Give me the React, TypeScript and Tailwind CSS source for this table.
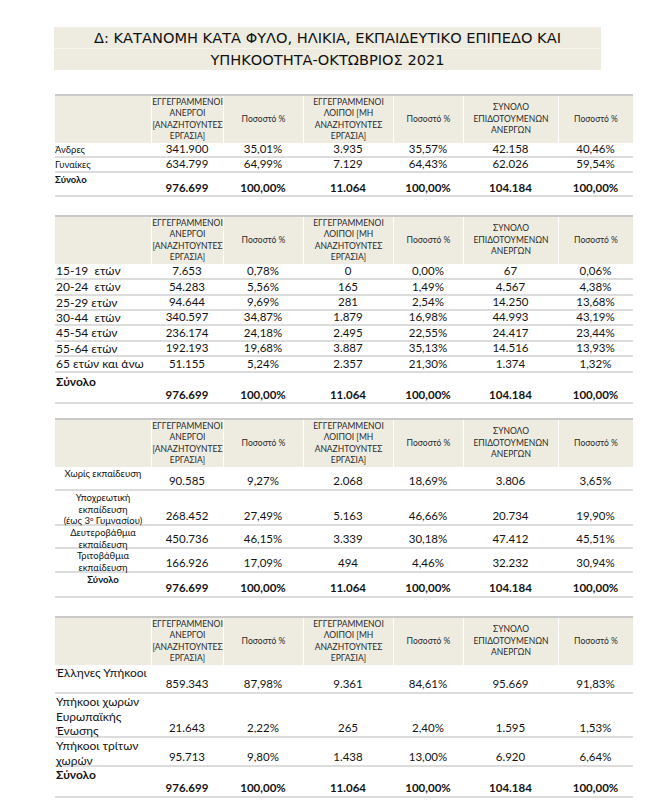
import type { ReactNode } from "react"

// column widths, label column first
const cols = ["w-[96px]", "w-[72px]", "w-[80px]", "w-[90px]", "w-[70px]", "w-[95px]", "w-[75px]"]

interface IRow {
    label: ReactNode,
    values: string[],
    h: string,
    total?: boolean,
}

interface ITable {
    rows: IRow[],
    labelCls: string,
    numCls: string,
    totalLabelCls: string,
}

const Header = () => {
    return (
        <div className="flex h-[49px] bg-[#eeece1] border-t-2 border-[#c9c9c9] text-[8.5px] leading-[11.5px] text-[#2a2a2a]">
            <div className={cols[0]} />
            <div className={`${cols[1]} border-l border-white flex items-center justify-center text-center`}>
                ΕΓΓΕΓΡΑΜΜΕΝΟΙ<br />ΑΝΕΡΓΟΙ<br />[ΑΝΑΖΗΤΟΥΝΤΕΣ<br />ΕΡΓΑΣΙΑ]
            </div>
            <div className={`${cols[2]} border-l border-white flex items-center justify-center`}>Ποσοστό %</div>
            <div className={`${cols[3]} border-l border-white flex items-center justify-center text-center`}>
                ΕΓΓΕΓΡΑΜΜΕΝΟΙ<br />ΛΟΙΠΟΙ [ΜΗ<br />ΑΝΑΖΗΤΟΥΝΤΕΣ<br />ΕΡΓΑΣΙΑ]
            </div>
            <div className={`${cols[4]} border-l border-white flex items-center justify-center`}>Ποσοστό %</div>
            <div className={`${cols[5]} border-l border-white flex items-center justify-center text-center`}>
                ΣΥΝΟΛΟ<br />ΕΠΙΔΟΤΟΥΜΕΝΩΝ<br />ΑΝΕΡΓΩΝ
            </div>
            <div className={`${cols[6]} border-l border-white flex items-center justify-center`}>Ποσοστό %</div>
        </div>
    )
}

const Table = (props: ITable) => {
    const { rows, labelCls, numCls, totalLabelCls } = props
    return (
        <div className="w-[578px]">
            <Header />
            {rows.map((r, i) => (
                <div key={i} className={`flex ${r.h} border-b-2 border-[#dcdcdc] text-[#141414]`}>
                    <div className={`${cols[0]} ${r.total ? totalLabelCls : labelCls}`}>{r.label}</div>
                    {r.values.map((v, j) => (
                        <div key={j} className={`${cols[j + 1]} flex justify-center text-[11.5px] ${numCls} ${r.total ? "font-bold" : ""}`}>
                            {v}
                        </div>
                    ))}
                </div>
            ))}
        </div>
    )
}

const totals = ["976.699", "100,00%", "11.064", "100,00%", "104.184", "100,00%"]

const App = () => {
    return (
        <div className="bg-white w-[655px] h-[805px] pt-[27px] font-['Lato',sans-serif]">
            {/* τίτλος */}
            <div className="ml-[54px] w-[547px] bg-[#eeebe0] font-['DejaVu_Sans',sans-serif] text-[14.6px] text-[#111] text-center">
                <div className="h-[22px] leading-[22px] border-b border-[#f7f5ee]">Δ: ΚΑΤΑΝΟΜΗ ΚΑΤΑ ΦΥΛΟ, ΗΛΙΚΙΑ, ΕΚΠΑΙΔΕΥΤΙΚΟ ΕΠΙΠΕΔΟ ΚΑΙ</div>
                <div className="h-[21px] leading-[21px]">ΥΠΗΚΟΟΤΗΤΑ-ΟΚΤΩΒΡΙΟΣ 2021</div>
            </div>

            <div className="ml-[55px] mt-[24px] flex flex-col">
                {/* φύλο */}
                <Table
                    labelCls="flex items-center text-[9.5px] leading-[12px]"
                    totalLabelCls="text-[9.5px] leading-[12px] font-bold pt-[1px]"
                    numCls="items-end leading-[14px]"
                    rows={[
                        { label: "Άνδρες", values: ["341.900", "35,01%", "3.935", "35,57%", "42.158", "40,46%"], h: "h-[15px]" },
                        { label: "Γυναίκες", values: ["634.799", "64,99%", "7.129", "64,43%", "62.026", "59,54%"], h: "h-[15px]" },
                        { label: "Σύνολο", values: totals, h: "h-[24px]", total: true },
                    ]}
                />

                {/* ηλικία */}
                <div className="mt-[18px]">
                    <Table
                        labelCls="flex items-center pl-[1px] text-[12px] leading-[14px] whitespace-pre"
                        totalLabelCls="pl-[1px] pt-[2px] text-[12px] leading-[14px] font-bold"
                        numCls="items-end leading-[14px]"
                        rows={[
                            { label: "15-19  ετών", values: ["7.653", "0,78%", "0", "0,00%", "67", "0,06%"], h: "h-[16px]" },
                            { label: "20-24  ετών", values: ["54.283", "5,56%", "165", "1,49%", "4.567", "4,38%"], h: "h-[16px]" },
                            { label: "25-29 ετών", values: ["94.644", "9,69%", "281", "2,54%", "14.250", "13,68%"], h: "h-[15px]" },
                            { label: "30-44  ετών", values: ["340.597", "34,87%", "1.879", "16,98%", "44.993", "43,19%"], h: "h-[15px]" },
                            { label: "45-54 ετών", values: ["236.174", "24,18%", "2.495", "22,55%", "24.417", "23,44%"], h: "h-[16px]" },
                            { label: "55-64 ετών", values: ["192.193", "19,68%", "3.887", "35,13%", "14.516", "13,93%"], h: "h-[15px]" },
                            { label: "65 ετών και άνω", values: ["51.155", "5,24%", "2.357", "21,30%", "1.374", "1,32%"], h: "h-[16px]" },
                            { label: "Σύνολο", values: totals, h: "h-[31px]", total: true },
                        ]}
                    />
                </div>

                {/* εκπαίδευση */}
                <div className="mt-[14px]">
                    <Table
                        labelCls="text-center text-[9.5px] leading-[11.5px] pt-[1px]"
                        totalLabelCls="text-center text-[9.5px] leading-[11.5px] font-bold pt-[1px]"
                        numCls="items-end pb-[1px] leading-[14px]"
                        rows={[
                            { label: "Χωρίς εκπαίδευση", values: ["90.585", "9,27%", "2.068", "18,69%", "3.806", "3,65%"], h: "h-[24px]" },
                            {
                                label: <>Υποχρεωτική<br />εκπαίδευση<br />(έως 3<sup className="text-[6px]">ο</sup> Γυμνασίου)</>,
                                values: ["268.452", "27,49%", "5.163", "46,66%", "20.734", "19,90%"], h: "h-[35px]"
                            },
                            { label: <>Δευτεροβάθμια<br />εκπαίδευση</>, values: ["450.736", "46,15%", "3.339", "30,18%", "47.412", "45,51%"], h: "h-[23px]" },
                            { label: <>Τριτοβάθμια<br />εκπαίδευση</>, values: ["166.926", "17,09%", "494", "4,46%", "32.232", "30,94%"], h: "h-[24px]" },
                            { label: "Σύνολο", values: totals, h: "h-[25px]", total: true },
                        ]}
                    />
                </div>

                {/* υπηκοότητα */}
                <div className="mt-[18px]">
                    <Table
                        labelCls="pl-[1px] pt-[1px] text-[12px] leading-[14.5px]"
                        totalLabelCls="pl-[1px] pt-[1px] text-[12px] leading-[14.5px] font-bold"
                        numCls="items-end pb-[1px] leading-[14px]"
                        rows={[
                            { label: "Έλληνες Υπήκοοι", values: ["859.343", "87,98%", "9.361", "84,61%", "95.669", "91,83%"], h: "h-[29px]" },
                            { label: <>Υπήκοοι χωρών<br />Ευρωπαϊκής<br />Ένωσης</>, values: ["21.643", "2,22%", "265", "2,40%", "1.595", "1,53%"], h: "h-[44px]" },
                            { label: <>Υπήκοοι τρίτων<br />χωρών</>, values: ["95.713", "9,80%", "1.438", "13,00%", "6.920", "6,64%"], h: "h-[29px]" },
                            { label: "Σύνολο", values: totals, h: "h-[31px]", total: true },
                        ]}
                    />
                </div>
            </div>
        </div>
    )
}

export default App
